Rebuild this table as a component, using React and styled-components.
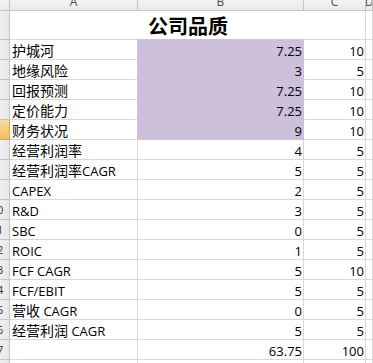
import React from "react";
import styled, { createGlobalStyle, css } from "styled-components";

const GRID = "#d9d9d9";
const HEAD_LINE = "#c5c5c5";
const PURPLE = "#ccc0da";

const Global = createGlobalStyle`
  html, body { margin: 0; padding: 0; background: #fff; overflow: hidden; }
  body { width: 373px; height: 363px; }
`;

const Sheet = styled.div`
  display: grid;
  grid-template-columns: 10px 128px 166px 62px 1fr;
  grid-template-rows: 11px 29px;
  grid-auto-rows: 20px;
  width: 373px;
  height: 363px;
  overflow: hidden;
  font-family: "Open Sans", "Noto Sans CJK SC", sans-serif;
  color: #000;
`;

const ColHead = styled.div`
  box-sizing: border-box;
  background: linear-gradient(#f4f4f4, #e9e9e9);
  border-right: 1px solid ${HEAD_LINE};
  border-bottom: 1px solid ${HEAD_LINE};
  display: flex;
  align-items: flex-end;
  justify-content: center;
  overflow: hidden;
  font-size: 12px;
  line-height: 12px;
  padding-bottom: 2px;
  color: #505050;
`;

const RowHead = styled.div`
  box-sizing: border-box;
  background: ${(p) =>
    p.$active ? "linear-gradient(#f9d99f, #f1c15f)" : "linear-gradient(90deg, #f0f0f0, #e6e6e6)"};
  border-right: 1px solid ${(p) => (p.$active ? "#e2a33c" : HEAD_LINE)};
  border-bottom: 1px solid ${(p) => (p.$active ? "#e2a33c" : HEAD_LINE)};
  display: flex;
  align-items: center;
  justify-content: flex-end;
  overflow: hidden;
  font-size: 11px;
  color: #333;
`;

const RowNum = styled.span`
  flex: 0 0 24px;
  text-align: center;
`;

const Title = styled.div`
  grid-column: 2 / 5;
  box-sizing: border-box;
  border-right: 1px solid ${GRID};
  border-bottom: 1px solid ${GRID};
  display: flex;
  align-items: center;
  justify-content: center;
  font-family: "Noto Sans CJK SC", sans-serif;
  font-weight: 700;
  font-size: 20px;
  line-height: 24px;
  padding-top: 1px;
  padding-left: 1px;
`;

const Cell = styled.div`
  box-sizing: border-box;
  background: ${(p) => p.$fill || "#fff"};
  border-right: 1px solid ${(p) => p.$fill || GRID};
  border-bottom: 1px solid ${(p) => p.$fill || GRID};
  display: flex;
  align-items: flex-end;
  justify-content: ${(p) => (p.$num ? "flex-end" : "flex-start")};
  padding: ${(p) => (p.$num ? "0 1px 0 0" : "0 0 0 2px")};
  overflow: hidden;
  white-space: nowrap;
  font-size: 13px;
  line-height: 16px;
  ${(p) =>
    p.$fill &&
    css`
      box-shadow: -1px -1px 0 0 ${p.$fill};
    `}
`;

const Zh = styled.span`
  font-family: "Noto Sans CJK SC", sans-serif;
  font-size: 14px;
  line-height: 16px;
`;

const Text = ({ children }) => {
  const parts = String(children).split(/([\u4e00-\u9fff]+)/).filter(Boolean);
  return (
    <span>
      {parts.map((t, i) =>
        /[\u4e00-\u9fff]/.test(t) ? <Zh key={i}>{t}</Zh> : <React.Fragment key={i}>{t}</React.Fragment>
      )}
    </span>
  );
};

const rows = [
  { n: 2, label: "护城河", b: "7.25", c: "10", purple: true },
  { n: 3, label: "地缘风险", b: "3", c: "5", purple: true },
  { n: 4, label: "回报预测", b: "7.25", c: "10", purple: true },
  { n: 5, label: "定价能力", b: "7.25", c: "10", purple: true },
  { n: 6, label: "财务状况", b: "9", c: "10", purple: true, active: true },
  { n: 7, label: "经营利润率", b: "4", c: "5" },
  { n: 8, label: "经营利润率CAGR", b: "5", c: "5" },
  { n: 9, label: "CAPEX", b: "2", c: "5" },
  { n: 10, label: "R&D", b: "3", c: "5" },
  { n: 11, label: "SBC", b: "0", c: "5" },
  { n: 12, label: "ROIC", b: "1", c: "5" },
  { n: 13, label: "FCF CAGR", b: "5", c: "10" },
  { n: 14, label: "FCF/EBIT", b: "5", c: "5" },
  { n: 15, label: "营收 CAGR", b: "0", c: "5" },
  { n: 16, label: "经营利润 CAGR", b: "5", c: "5" },
  { n: 17, label: "", b: "63.75", c: "100" },
  { n: 18, label: "", b: "", c: "" },
];

export default function App() {
  return (
    <>
      <Global />
      <Sheet>
        <ColHead />
        <ColHead>A</ColHead>
        <ColHead>B</ColHead>
        <ColHead>C</ColHead>
        <ColHead>D</ColHead>

        <RowHead>
          <RowNum>1</RowNum>
        </RowHead>
        <Title>公司品质</Title>
        <Cell />

        {rows.map((r) => (
          <React.Fragment key={r.n}>
            <RowHead $active={r.active}>
              <RowNum>{r.n}</RowNum>
            </RowHead>
            <Cell>
              <Text>{r.label}</Text>
            </Cell>
            <Cell $num $fill={r.purple ? PURPLE : undefined}>
              {r.b}
            </Cell>
            <Cell $num>{r.c}</Cell>
            <Cell />
          </React.Fragment>
        ))}
      </Sheet>
    </>
  );
}
